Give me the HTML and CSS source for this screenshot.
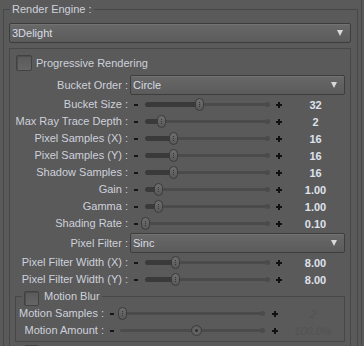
FILE: index.html
```html
<!DOCTYPE html>
<html lang="en">
<head>
  <meta charset="UTF-8">
  <meta name="viewport" content="width=device-width, initial-scale=1.0">
  <title>Render Settings</title>
  <link rel="stylesheet" href="styles.css">
</head>
<body>

  <div class="panel">
    <fieldset class="engine">
      <legend>Render Engine :</legend>
      <div class="select"><span>3Delight</span><i class="arrow"></i></div>

      <div class="group">
        <div class="check-row"><span class="checkbox"></span>Progressive Rendering</div>

        <div class="select-row"><span class="label">Bucket Order :</span><div class="select"><span>Circle</span><i class="arrow"></i></div></div>

        <div class="row"><span class="label">Bucket Size :</span><span class="minus"></span><div class="track" style="--pos:57px"><div class="fill"></div><div class="handle"></div></div><span class="plus"></span><span class="value">32</span></div>
        <div class="row"><span class="label">Max Ray Trace Depth :</span><span class="minus"></span><div class="track" style="--pos:19px"><div class="fill"></div><div class="handle"></div></div><span class="plus"></span><span class="value">2</span></div>
        <div class="row"><span class="label">Pixel Samples (X) :</span><span class="minus"></span><div class="track" style="--pos:31px"><div class="fill"></div><div class="handle"></div></div><span class="plus"></span><span class="value">16</span></div>
        <div class="row"><span class="label">Pixel Samples (Y) :</span><span class="minus"></span><div class="track" style="--pos:31px"><div class="fill"></div><div class="handle"></div></div><span class="plus"></span><span class="value">16</span></div>
        <div class="row"><span class="label">Shadow Samples :</span><span class="minus"></span><div class="track" style="--pos:31px"><div class="fill"></div><div class="handle"></div></div><span class="plus"></span><span class="value">16</span></div>
        <div class="row"><span class="label">Gain :</span><span class="minus"></span><div class="track" style="--pos:16px"><div class="fill"></div><div class="handle"></div></div><span class="plus"></span><span class="value">1.00</span></div>
        <div class="row"><span class="label">Gamma :</span><span class="minus"></span><div class="track" style="--pos:16px"><div class="fill"></div><div class="handle"></div></div><span class="plus"></span><span class="value">1.00</span></div>
        <div class="row"><span class="label">Shading Rate :</span><span class="minus"></span><div class="track" style="--pos:3px"><div class="fill"></div><div class="handle"></div></div><span class="plus"></span><span class="value">0.10</span></div>

        <div class="select-row lower"><span class="label">Pixel Filter :</span><div class="select"><span>Sinc</span><i class="arrow"></i></div></div>

        <div class="row"><span class="label">Pixel Filter Width (X) :</span><span class="minus"></span><div class="track" style="--pos:33px"><div class="fill"></div><div class="handle"></div></div><span class="plus"></span><span class="value">8.00</span></div>
        <div class="row"><span class="label">Pixel Filter Width (Y) :</span><span class="minus"></span><div class="track" style="--pos:33px"><div class="fill"></div><div class="handle"></div></div><span class="plus"></span><span class="value">8.00</span></div>

        <fieldset class="motion">
          <legend><span class="checkbox small"></span>Motion Blur</legend>
          <div class="row"><span class="label">Motion Samples :</span><span class="minus"></span><div class="track" style="--pos:4px"><div class="handle"></div></div><span class="plus"></span><span class="value off">2</span></div>
          <div class="row"><span class="label">Motion Amount :</span><span class="minus"></span><div class="track" style="--pos:78px"><div class="handle round"></div></div><span class="plus"></span><span class="value off">100.0%</span></div>
        </fieldset>

        <div class="check-row next"><span class="checkbox small"></span></div>
      </div>
    </fieldset>
  </div>

</body>
</html>
```

FILE: styles.css
```css
* {
  box-sizing: border-box;
}
body {
  margin: 0;
  height: 346px;
  overflow: hidden;
  background: #5a5a5a;
  font-family: "Liberation Sans", Arial, sans-serif;
  font-size: 11px;
  color: #ced1db;
}
.panel {
  width: 362px;
  height: 346px;
  overflow: hidden;
  border-right: 1px solid #474747;
}
fieldset {
  margin: 0;
  padding: 0;
  min-width: 0;
  border: 1px solid #474747;
}
legend {
  padding: 0 2px;
  line-height: 13px;
}
.engine {
  margin: 3px 0 0 3px;
  width: 355px;
  height: 343px;
  padding: 7px 6px 0 5px;
  border-bottom: 0;
  overflow: hidden;
}
.engine > legend {
  margin-left: 1px;
}

/* drop-down boxes */
.select {
  height: 20px;
  display: flex;
  align-items: center;
  justify-content: space-between;
  padding: 0 7px 0 2px;
  border: 1px solid #3d3d3d;
  border-radius: 2px;
  background: linear-gradient(#686868, #5b5b5b);
  box-shadow: inset 0 1px 0 #727272;
  color: #d8dbe4;
}
.arrow {
  width: 0;
  height: 0;
  border-left: 3.5px solid transparent;
  border-right: 3.5px solid transparent;
  border-top: 6px solid #d9d9d9;
}

.group {
  margin-top: 5px;
  height: 300px;
  border: 1px solid #474747;
  border-bottom: 0;
  padding: 6px 5px 0 5px;
}
.check-row {
  display: flex;
  align-items: center;
  gap: 4px;
  height: 16px;
  margin: 0 0 4px 1px;
}
.checkbox {
  width: 16px;
  height: 16px;
  border: 1px solid #424242;
  border-radius: 2px;
  background: linear-gradient(#5a5a5a, #666666);
  box-shadow: inset 1px 1px 0 #4e4e4e;
}
.checkbox.small {
  width: 15px;
  height: 15px;
}

.select-row {
  display: grid;
  grid-template-columns: 115px 1fr;
  margin-bottom: 1px;
}
.select-row.lower {
  margin-top: 1px;
}

/* slider rows */
.row {
  display: grid;
  grid-template-columns: 115px 12px 130px 14px 1fr;
  align-items: center;
  height: 17px;
}
.label {
  text-align: right;
  padding-right: 2px;
  white-space: nowrap;
  line-height: 17px;
}
.select-row .label {
  line-height: 20px;
}
.minus::before {
  content: "";
  display: block;
  width: 4px;
  height: 2px;
  margin: 0 auto;
  background: #161616;
}
.plus {
  width: 6px;
  height: 6px;
  margin: 0 auto;
  background:
    linear-gradient(#111, #111) center / 6px 2px no-repeat,
    linear-gradient(#111, #111) center / 2px 6px no-repeat;
}
.track {
  position: relative;
  height: 17px;
}
.track::before {
  content: "";
  position: absolute;
  left: 4px;
  right: 3px;
  top: 7px;
  height: 3px;
  border-radius: 2px;
  background: #4b4b4b;
}
.track::after {
  content: "";
  position: absolute;
  right: 2px;
  top: 6px;
  width: 5px;
  height: 5px;
  border-radius: 50%;
  background: #4b4b4b;
}
.fill {
  position: absolute;
  left: 3px;
  top: 6px;
  width: var(--pos);
  height: 5px;
  border-radius: 3px;
  background: #3a3a3a;
}
.handle {
  position: absolute;
  z-index: 1;
  top: 2px;
  left: var(--pos);
  width: 9px;
  height: 13px;
  margin-left: -4.5px;
  border: 1px solid #3b3b3b;
  border-radius: 5px;
  background: linear-gradient(#6e6e6e, #585858);
}
.handle::after {
  content: "";
  position: absolute;
  left: 3px;
  top: 3px;
  height: 5px;
  border-left: 1px dotted #353535;
}
.handle.round {
  top: 3px;
  width: 11px;
  height: 11px;
  margin-left: -5.5px;
  border-radius: 50%;
  background: radial-gradient(#6a6a6a, #585858);
}
.handle.round::after {
  left: 3px;
  top: 3px;
  width: 3px;
  height: 3px;
  border: 0;
  border-radius: 50%;
  background: #2e2e2e;
}
.value {
  text-align: center;
  font-weight: bold;
  color: #dfe2ec;
}
.value.off {
  font-weight: normal;
  font-style: italic;
  color: #525252;
}

/* motion blur sub group */
.motion {
  margin-top: 2px;
  padding: 2px 0 2px 0;
}
.motion > legend {
  display: flex;
  align-items: flex-start;
  gap: 5px;
  height: 13px;
  margin-left: 6px;
}
.motion > legend .checkbox {
  margin-top: 1px;
}
.motion .row {
  grid-template-columns: 90px 12px 150px 14px 1fr;
}
.motion .track::before {
  left: 2px;
  right: 4px;
}
.motion .track::after {
  right: 3px;
}
.next {
  margin: 2px 0 0 9px;
}
```
